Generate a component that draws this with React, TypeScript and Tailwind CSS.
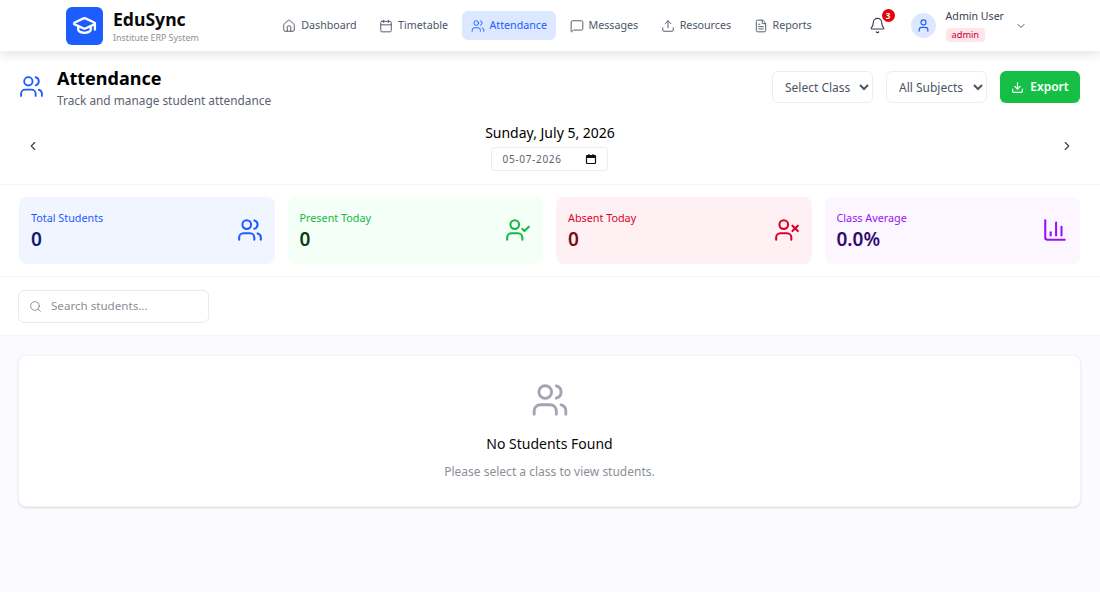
import { Home, Calendar, Users, MessageSquare, Upload, FileText, Bell, User, ChevronDown, ChevronLeft, ChevronRight, GraduationCap, UserCheck, UserX, ChartColumn, Download, Search } from "lucide-react";

const nav = [
  { label: "Dashboard", Icon: Home },
  { label: "Timetable", Icon: Calendar },
  { label: "Attendance", Icon: Users, active: true },
  { label: "Messages", Icon: MessageSquare },
  { label: "Resources", Icon: Upload },
  { label: "Reports", Icon: FileText },
];

const stats = [
  { label: "Total Students", value: "0", Icon: Users, bg: "bg-[#f0f5ff]", c: "text-[#1d5cff]", v: "text-[#0c1a70]" },
  { label: "Present Today", value: "0", Icon: UserCheck, bg: "bg-[#f3fff7]", c: "text-[#16b83f]", v: "text-[#0b3d12]" },
  { label: "Absent Today", value: "0", Icon: UserX, bg: "bg-[#fff0f3]", c: "text-[#dc0028]", v: "text-[#7a0a12]" },
  { label: "Class Average", value: "0.0%", Icon: ChartColumn, bg: "bg-[#fbf6ff]", c: "text-[#9810fa]", v: "text-[#2f0a70]" },
];

export default function App() {
  return (
    <div className="min-h-[592px] bg-[#fafaff] text-[#0a0a0a] font-['Noto_Sans',sans-serif]">
      <header className="relative z-10 h-[51px] bg-white shadow-[0_4px_10px_rgba(0,0,0,0.1)] flex items-center pl-[66px] pr-[73px]">
        <div className="flex items-center gap-[10px]">
          <div className="w-[37px] h-[38px] rounded-[6px] bg-[#1d5cff] flex items-center justify-center text-white">
            <GraduationCap size={25} strokeWidth={2.2} />
          </div>
          <div className="flex flex-col">
            <span className="text-[17.6px] leading-[24px] font-bold">EduSync</span>
            <span className="text-[8.9px] leading-[14px] text-[#8a8f98]">Institute ERP System</span>
          </div>
        </div>
        <nav className="flex items-center gap-[4.5px] ml-[74.5px]">
          {nav.map(({ label, Icon, active }) => (
            <div key={label} className={`h-[29px] flex items-center gap-[5px] px-[9px] rounded-[6px] text-[10.7px] ${active ? "bg-[#dbe8ff] text-[#1d5cff]" : "text-[#4a5565]"}`}>
              <Icon size={14} strokeWidth={1.6} />
              <span>{label}</span>
            </div>
          ))}
        </nav>
        <div className="flex items-center ml-auto">
          <div className="relative mr-[25px] text-[#374151]">
            <Bell size={17} strokeWidth={1.6} />
            <span className="absolute -top-[8px] -right-[9px] w-[13px] h-[13px] rounded-full bg-[#e7000b] text-white text-[8px] font-bold flex items-center justify-center">3</span>
          </div>
          <div className="w-[25px] h-[25px] rounded-full bg-[#dbe8ff] text-[#1d5cff] flex items-center justify-center mr-[10px]">
            <User size={15} strokeWidth={1.8} />
          </div>
          <div className="flex flex-col items-start pb-[2px] mr-[11px]">
            <span className="text-[10.6px] leading-[16px] text-[#364153]">Admin User</span>
            <span className="text-[9.2px] leading-[14px] px-[6px] rounded-[4px] bg-[#ffe4ea] text-[#c10030] mt-[4px]">admin</span>
          </div>
          <ChevronDown size={12} className="text-[#4a5565]" />
        </div>
      </header>

      <section className="bg-white border-b border-[#f3f4f6] h-[134px] px-[19px] pt-[14px]">
        <div className="flex items-start justify-between">
          <div className="flex items-start gap-[13px]">
            <Users size={25} strokeWidth={1.8} className="text-[#1d5cff] mt-[9px]" />
            <div>
              <h1 className="text-[18px] leading-[26px] font-bold text-black">Attendance</h1>
              <p className="text-[11.85px] leading-[16px] text-[#5a6270] mt-[1px]">Track and manage student attendance</p>
            </div>
          </div>
          <div className="flex items-center gap-[13px] mt-[6px] mr-[1px]">
            <select className="w-[101px] h-[32px] border border-[#ecedf0] rounded-[6px] bg-white text-[12px] text-[#4a5565] pl-[8px]">
              <option>Select Class</option>
            </select>
            <select className="w-[101px] h-[32px] border border-[#ecedf0] rounded-[6px] bg-white text-[12px] text-[#4a5565] pl-[8px]">
              <option>All Subjects</option>
            </select>
            <button className="w-[80px] h-[32px] rounded-[6px] bg-[#15bf45] text-white text-[12px] font-semibold flex items-center justify-center gap-[6px]">
              <Download size={13} strokeWidth={2.2} />
              Export
            </button>
          </div>
        </div>
        <div className="flex items-center justify-between mt-[15px] px-[7px]">
          <ChevronLeft size={14} className="text-[#364153] mb-[2px]" />
          <div className="flex flex-col items-center">
            <div className="text-[14px] leading-[20px] text-black">Sunday, July 5, 2026</div>
            <div className="mt-[4px] w-[117px] h-[24px] border border-[#ecedf0] rounded-[3px] flex items-center justify-between pl-[10px] pr-[10px] text-[10px] text-[#5a6270] tracking-[0.7px]">
              <span>05-07-2026</span>
              <svg width="12" height="12" viewBox="0 0 24 24" fill="none" stroke="#111" strokeWidth="2.4"><rect x="3" y="5" width="18" height="16" rx="1" /><path d="M3 8h18" strokeWidth="4" /><path d="M8 2v3M16 2v3" /></svg>
            </div>
          </div>
          <ChevronRight size={14} className="text-[#364153] mb-[2px]" />
        </div>
      </section>

      <section className="bg-white border-b border-[#f3f4f6] h-[92px] px-[19px] pt-[12px] grid grid-cols-4 gap-[13px] content-start pr-[20px]">
        {stats.map(({ label, value, Icon, bg, c, v }) => (
          <div key={label} className={`h-[67px] rounded-[8px] ${bg} px-[12px] flex items-center justify-between`}>
            <div>
              <div className={`text-[10.8px] leading-[14px] mt-[1px] ${c}`}>{label}</div>
              <div className={`text-[19px] leading-[26px] font-semibold mt-[1px] ${v}`}>{value}</div>
            </div>
            <Icon size={26} strokeWidth={1.9} className={`${c} mt-[-2px]`} />
          </div>
        ))}
      </section>

      <section className="bg-white border-b border-[#f3f4f6] h-[59px] px-[18px] flex items-center">
        <div className="w-[191px] h-[33px] border border-[#e9eaee] rounded-[6px] flex items-center pl-[10px] gap-[9px] text-[11.6px] text-[#8a8f98]">
          <Search size={13} strokeWidth={1.8} />
          <span>Search students...</span>
        </div>
      </section>

      <main className="pl-[18px] pr-[19px] pt-[19px]">
        <div className="h-[152px] bg-white rounded-[8px] border border-[#f3f4f6] shadow-[0_1px_2px_rgba(0,0,0,0.12)] flex flex-col items-center pt-[25px]">
          <Users size={38} strokeWidth={1.8} className="text-[#a3a3b5]" />
          <div className="text-[14px] leading-[20px] mt-[15px] text-[#0a0a0a]">No Students Found</div>
          <div className="text-[12px] leading-[16px] mt-[10px] text-[#8a8f98]">Please select a class to view students.</div>
        </div>
      </main>
    </div>
  );
}
